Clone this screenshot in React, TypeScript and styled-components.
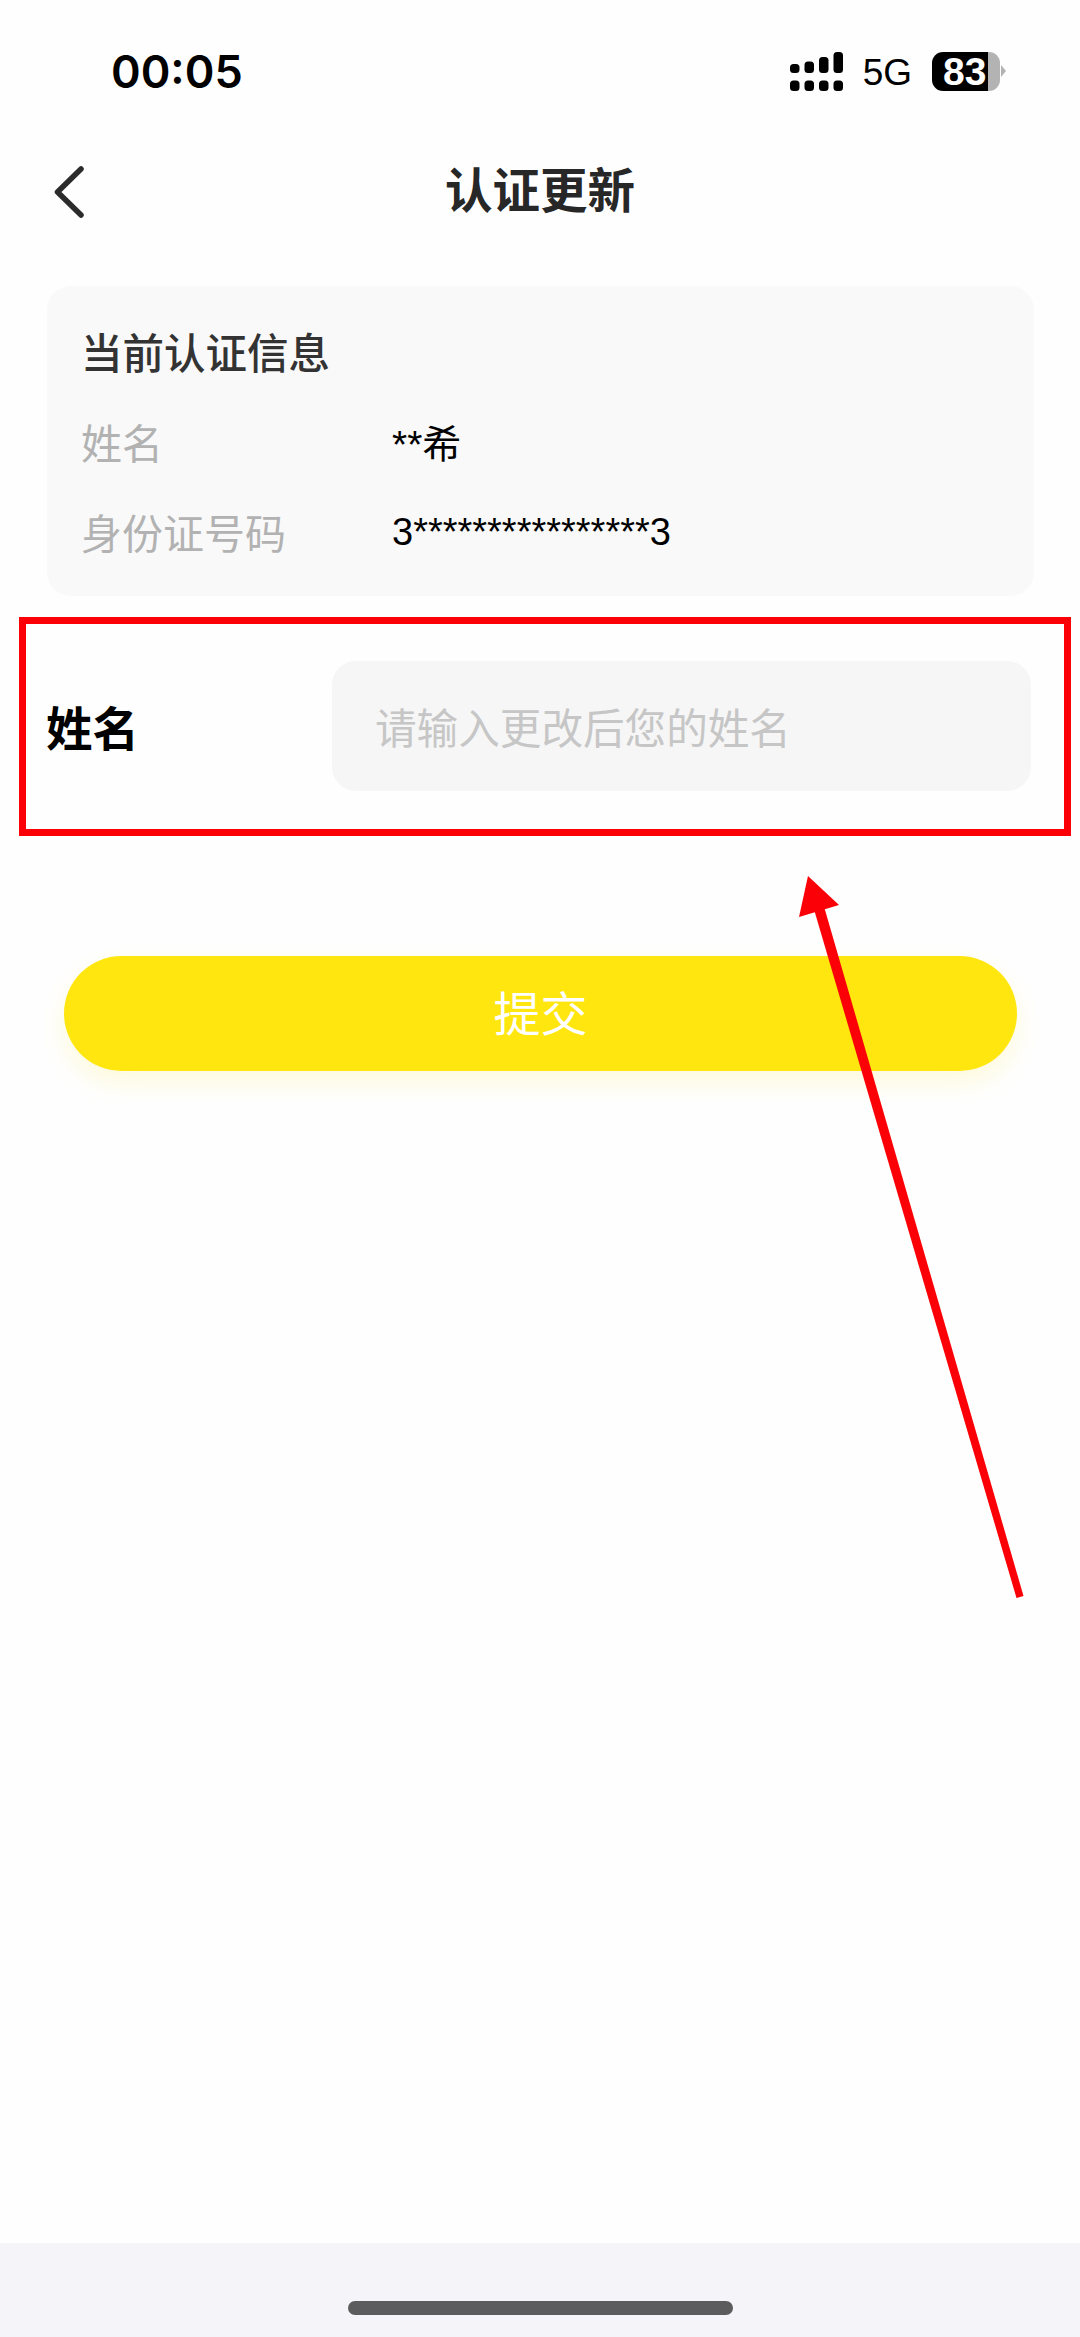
import React from 'react';
import styled, { createGlobalStyle } from 'styled-components';

const Global = createGlobalStyle`
  html, body { margin: 0; padding: 0; background: #fefefe; }
  * { box-sizing: border-box; }
`;

const CJK = `"Liberation Sans", "Noto Sans CJK SC", sans-serif`;

const Page = styled.div`
  position: relative;
  width: 1080px;
  height: 2337px;
  overflow: hidden;
  display: flex;
  flex-direction: column;
  background: #fefefe;
  font-family: ${CJK};
`;

const StatusBar = styled.div`
  height: 126px;
  padding: 52px 80px 0 111px;
  display: flex;
  justify-content: space-between;
  align-items: flex-start;
  flex: none;
`;

const Time = styled.div`
  font-family: Inter, sans-serif;
  font-size: 45px;
  line-height: 40px;
  font-weight: 600;
  color: #000;
`;

const StatusIcons = styled.div`
  display: flex;
  align-items: center;
  height: 39px;
  gap: 20px;
`;

const Net = styled.span`
  font-family: "Liberation Sans", sans-serif;
  font-size: 37px;
  line-height: 39px;
  padding-top: 2px;
  color: #000;
`;

const Battery = styled.div`
  position: relative;
  width: 68px;
  height: 39px;
  border-radius: 11px;
  background: linear-gradient(to right, #000 56px, #b3b3b3 56px);
  color: #fff;
  font-family: "Liberation Sans", sans-serif;
  font-weight: 700;
  font-size: 39px;
  line-height: 39px;
  padding-left: 11px;
  &::after {
    content: '';
    position: absolute;
    right: -6px;
    top: 13px;
    border-left: 5px solid #b3b3b3;
    border-top: 6px solid transparent;
    border-bottom: 6px solid transparent;
  }
`;

const NavBar = styled.div`
  position: relative;
  height: 132px;
  flex: none;
  display: flex;
  align-items: center;
  justify-content: center;
`;

const BackIcon = styled.svg`
  position: absolute;
  left: 53px;
  top: 40px;
  width: 32px;
  height: 52px;
`;

const Title = styled.h1`
  margin: 0;
  font-size: 47.5px;
  line-height: 60px;
  font-weight: 700;
  color: #272727;
`;

const InfoCard = styled.section`
  margin: 28px 46px 0 47px;
  height: 310px;
  padding: 44px 34px 0;
  border-radius: 24px;
  background: #f9f9f9;
  flex: none;
`;

const CardTitle = styled.h2`
  margin: 0 0 31px;
  font-size: 41.5px;
  line-height: 50px;
  font-weight: 500;
  color: #333;
`;

const InfoRow = styled.div`
  display: flex;
  height: 60px;
  margin-bottom: 30px;
  align-items: center;
`;

const InfoLabel = styled.span`
  width: 311px;
  font-size: 41px;
  font-weight: 400;
  color: #b2b2b2;
`;

const InfoValue = styled.span<{ $name?: boolean }>`
  font-size: ${(p) => (p.$name ? '39px' : '38px')};
  padding-top: ${(p) => (p.$name ? '0' : '3px')};
  color: #000;
`;

const FormRow = styled.div`
  margin: 21px 9px 0 19px;
  height: 219px;
  border: 7px solid #fb0006;
  display: flex;
  align-items: center;
  padding: 0 33px 2px 20px;
  flex: none;
`;

const FieldLabel = styled.label`
  width: 286px;
  flex: none;
  font-size: 46.5px;
  font-weight: 700;
  color: #000;
`;

const Field = styled.div`
  flex: 1;
  height: 130px;
  border-radius: 24px;
  background: #f6f6f6;
  display: flex;
  align-items: center;
  padding-left: 43px;
  font-size: 41.6px;
  color: #c6c6c6;
`;

const Submit = styled.button`
  display: block;
  flex: none;
  margin: 120px 0 0 64px;
  width: 953px;
  height: 115px;
  border: 0;
  border-radius: 57.5px;
  padding: 0 0 6px;
  background: #ffe60f;
  box-shadow: 0 12px 24px rgba(255, 230, 15, 0.14);
  color: #fff;
  font-family: ${CJK};
  font-size: 47px;
  font-weight: 400;
`;

const Spacer = styled.div`
  flex: 1;
`;

const BottomBand = styled.div`
  height: 94px;
  flex: none;
  background: #f5f5f9;
  display: flex;
  justify-content: center;
  padding-top: 58px;
`;

const HomeBar = styled.div`
  width: 385px;
  height: 14px;
  border-radius: 7px;
  background: #5c5c5e;
`;

const ArrowOverlay = styled.svg`
  position: absolute;
  left: 780px;
  top: 860px;
  width: 260px;
  height: 750px;
  pointer-events: none;
`;

export default function App() {
  return (
    <Page>
      <Global />
      <StatusBar>
        <Time>00:05</Time>
        <StatusIcons>
          <svg width="53" height="39" viewBox="0 0 53 39" fill="#000">
            <rect x="0" y="12" width="9.5" height="9" rx="3.5" />
            <rect x="14.5" y="9.5" width="9.5" height="11.5" rx="3.5" />
            <rect x="29" y="5" width="9.5" height="16" rx="3.5" />
            <rect x="43.5" y="0" width="9.5" height="21" rx="3.5" />
            <rect x="0" y="28.5" width="9.5" height="10.5" rx="3.5" />
            <rect x="14.5" y="28.5" width="9.5" height="10.5" rx="3.5" />
            <rect x="29" y="28.5" width="9.5" height="10.5" rx="3.5" />
            <rect x="43.5" y="28.5" width="9.5" height="10.5" rx="3.5" />
          </svg>
          <Net>5G</Net>
          <Battery>83</Battery>
        </StatusIcons>
      </StatusBar>
      <NavBar>
        <BackIcon viewBox="0 0 32 52" fill="none" stroke="#2b2b2b" strokeWidth="5.5" strokeLinecap="round" strokeLinejoin="round">
          <path d="M28 3 L4.5 26 L28 49" />
        </BackIcon>
        <Title>认证更新</Title>
      </NavBar>
      <InfoCard>
        <CardTitle>当前认证信息</CardTitle>
        <InfoRow>
          <InfoLabel>姓名</InfoLabel>
          <InfoValue $name>**希</InfoValue>
        </InfoRow>
        <InfoRow>
          <InfoLabel>身份证号码</InfoLabel>
          <InfoValue>3****************3</InfoValue>
        </InfoRow>
      </InfoCard>
      <FormRow>
        <FieldLabel>姓名</FieldLabel>
        <Field>请输入更改后您的姓名</Field>
      </FormRow>
      <Submit>提交</Submit>
      <Spacer />
      <BottomBand>
        <HomeBar />
      </BottomBand>
      <ArrowOverlay viewBox="780 860 260 750">
        <polygon points="813,906 823,903 1023.5,1596 1016.5,1598" fill="#fb0006" />
        <polygon points="808,876 839,905 799,917" fill="#fb0006" />
      </ArrowOverlay>
    </Page>
  );
}
